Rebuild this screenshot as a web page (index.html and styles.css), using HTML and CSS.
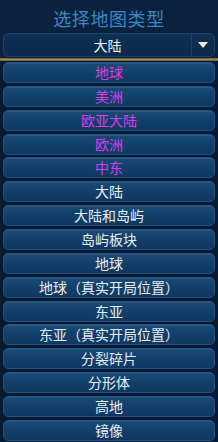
FILE: index.html
```html
<!DOCTYPE html>
<html lang="zh">
<head>
<meta charset="utf-8">
<link rel="stylesheet" href="styles.css">
</head>
<body>
<div class="panel">
  <div class="title">选择地图类型</div>
  <div class="select">
    <div class="select-value">大陆</div>
    <div class="select-btn">
      <svg width="12" height="8" viewBox="0 0 12 8"><polygon points="1,1 11,1 6,7" fill="#f4ead0"/></svg>
    </div>
  </div>
  <div class="gold"></div>
  <div class="list">
    <div class="row hl">地球</div>
    <div class="row hl">美洲</div>
    <div class="row hl">欧亚大陆</div>
    <div class="row hl">欧洲</div>
    <div class="row hl">中东</div>
    <div class="row">大陆</div>
    <div class="row">大陆和岛屿</div>
    <div class="row">岛屿板块</div>
    <div class="row">地球</div>
    <div class="row">地球（真实开局位置）</div>
    <div class="row">东亚</div>
    <div class="row">东亚（真实开局位置）</div>
    <div class="row">分裂碎片</div>
    <div class="row">分形体</div>
    <div class="row">高地</div>
    <div class="row">镜像</div>
  </div>
</div>
</body>
</html>
```
FILE: styles.css
```css
html, body {
  margin: 0;
  padding: 0;
  background: #0a1f3a;
  overflow: hidden;
}
.panel {
  width: 218px;
  height: 442px;
  font-family: "Noto Sans CJK SC", "Noto Sans", sans-serif;
  background: #0b223f;
}
.title {
  height: 32px;
  line-height: 36px;
  text-align: center;
  font-size: 18px;
  letter-spacing: 0.6px;
  color: #3a88c2;
}
.select {
  margin: 1px 3px 0 3px;
  height: 22px;
  display: flex;
  border: 1px solid #1a4169;
  border-radius: 5px;
  background: linear-gradient(#0f2f55, #0c2a4d);
}
.select-value {
  flex: 1;
  text-align: center;
  color: #eef3f8;
  font-size: 14px;
  line-height: 22px;
  border-right: 1px solid #1a4169;
  padding-left: 20px;
}
.select-btn {
  width: 22px;
  display: flex;
  align-items: center;
  justify-content: center;
}
.gold {
  height: 3px;
  margin-top: 1px;
  background: linear-gradient(#6d5a3a, #a48a5c, #6a573a);
}
.list {
  display: flex;
  flex-direction: column;
  gap: 2.87px;
  padding: 1px 3px 0 3px;
  background: #071a31;
}
.row {
  height: 19px;
  flex: none;
  border: 1px solid #24527d;
  border-radius: 5px;
  background: linear-gradient(#184a76, #12406a 50%, #0f3861);
  box-shadow: inset 0 1px 0 rgba(90, 150, 200, 0.25);
  text-align: center;
  color: #e6edf4;
  font-size: 14px;
  line-height: 19px;
}
.row.hl {
  color: #d63ee9;
}
```
